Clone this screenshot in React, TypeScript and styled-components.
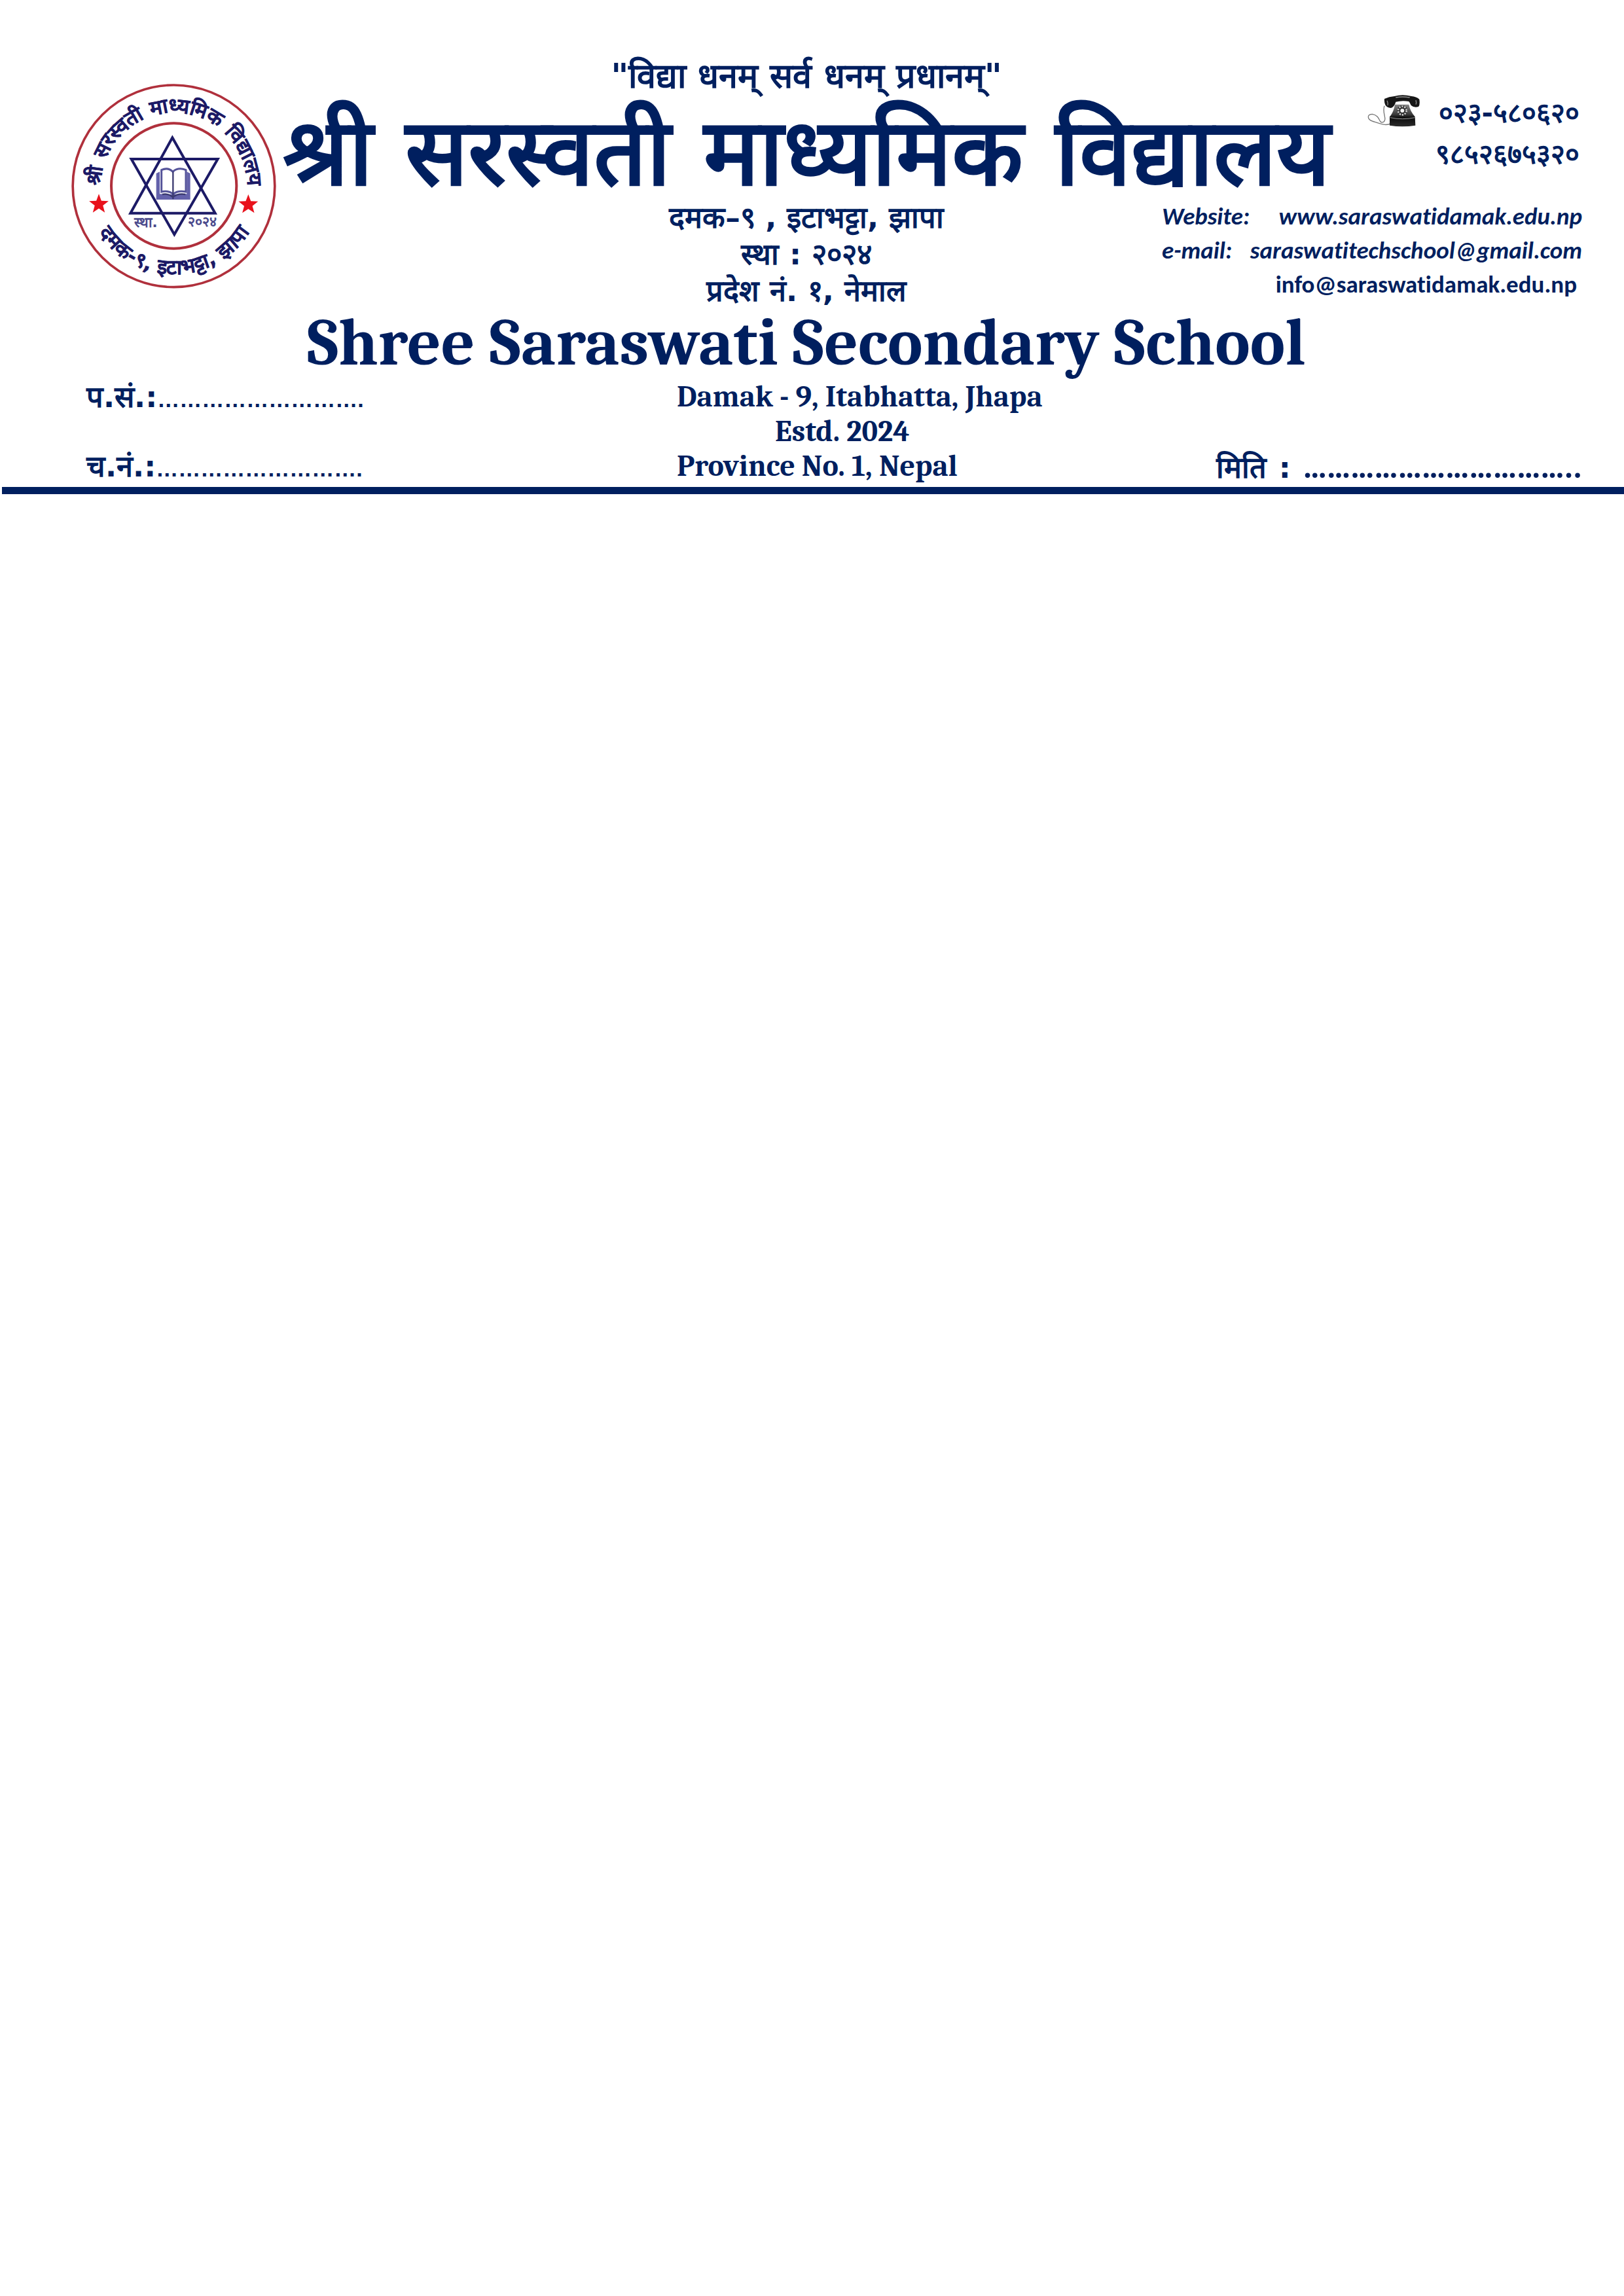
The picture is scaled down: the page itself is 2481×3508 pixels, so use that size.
import React from 'react';
import styled, { createGlobalStyle } from 'styled-components';

const navy = '#001f5f';
const deva = '"DejaVu Sans", sans-serif';
const serif = 'Caladea, Cambria, "Liberation Serif", serif';
const sans = 'Carlito, Calibri, Lato, sans-serif';

const GlobalStyle = createGlobalStyle`
  body {
    margin: 0;
    background: #ffffff;
    color: ${navy};
  }
`;

const Page = styled.main`
  display: flex;
  flex-direction: column;
`;

const Masthead = styled.header`
  display: grid;
  grid-template-columns: 318px 1fr 380px;
  grid-template-rows: repeat(4, auto);
  padding: 71px 64px 0 109px;
`;

const Crest = styled.svg`
  grid-column: 1;
  grid-row: 1 / 4;
  width: 313px;
  height: 313px;
  margin-top: 57px;
`;

const Motto = styled.p`
  grid-column: 2;
  margin: 0;
  text-align: center;
  white-space: nowrap;
  font: 700 52px/90px ${deva};
`;

const NepaliName = styled.h1`
  grid-column: 2;
  margin: 0;
  text-align: center;
  white-space: nowrap;
  font: 700 142px/144px ${deva};
`;

const NepaliAddress = styled.address`
  grid-column: 2;
  grid-row: 3;
  text-align: center;
  font: 700 45px/56px ${deva};
`;

const EnglishName = styled.h2`
  grid-column: 2;
  grid-row: 4;
  margin: 0;
  text-align: center;
  white-space: nowrap;
  font: 700 101px/102px ${serif};
`;

const Phones = styled.div`
  grid-column: 3;
  grid-row: 1 / 3;
  display: flex;
  justify-content: flex-end;
  align-items: flex-start;
  gap: 24px;
  padding-top: 70px;
`;

const PhoneIcon = styled.svg`
  width: 80px;
  height: 50px;
  padding-top: 4px;
`;

const PhoneList = styled.div`
  text-align: right;
  padding-right: 4px;
  font: 700 42px/63px ${deva};
`;

const Web = styled.div`
  grid-column: 2 / 4;
  grid-row: 3;
  justify-self: end;
  width: 642px;
  font: 700 37px/52px ${sans};
  font-variant-ligatures: none;
`;

const WebRow = styled.div<{ $upright?: boolean }>`
  display: flex;
  justify-content: ${p => (p.$upright ? 'flex-end' : 'space-between')};
  padding-right: ${p => (p.$upright ? '8px' : '0')};
  font-style: ${p => (p.$upright ? 'normal' : 'italic')};
`;

const Link = styled.a`
  color: inherit;
  text-decoration: none;
`;

const Details = styled.section`
  display: grid;
  grid-template-columns: 902fr 824fr 559fr;
  grid-auto-rows: 53px;
  padding: 5px 64px 5px 132px;
  white-space: nowrap;
  font: 700 46px/53px ${serif};
`;

const Line = styled.div<{ $indent?: boolean }>`
  grid-column: 2;
  padding-left: ${p => (p.$indent ? '150px' : '0')};
`;

const Reference = styled.div<{ $row: number }>`
  grid-column: 1;
  grid-row: ${p => p.$row};
  font: 700 45px/53px ${deva};
`;

const DateField = styled.div`
  grid-column: 3;
  grid-row: 3;
  display: flex;
  justify-content: space-between;
  align-items: baseline;
  font: 700 45px/53px ${deva};
`;

const Dots = styled.span`
  font: 700 34px/53px "Liberation Sans", sans-serif;
`;

const RoundDots = styled.span`
  font: 700 51px/53px ${sans};
`;

const Rule = styled.hr`
  height: 11px;
  margin: 0 0 0 3px;
  border: 0;
  background: ${navy};
`;

const starPath = (cx: number, cy: number, r: number) =>
  Array.from({ length: 10 }, (_, i) => {
    const radius = i % 2 ? r * 0.42 : r;
    const a = (Math.PI / 5) * i - Math.PI / 2;
    return `${(cx + radius * Math.cos(a)).toFixed(1)},${(cy + radius * Math.sin(a)).toFixed(1)}`;
  }).join(' ');

function SchoolCrest() {
  return (
    <Crest viewBox="57 55 939 939" role="img" aria-label="School crest">
      <defs>
        <path id="arc-top" d="M 191 560 L 191 524 A 336 336 0 0 1 863 524 L 863 560" />
        <path id="arc-bottom" d="M 121 523 A 406 406 0 0 0 933 523" />
      </defs>
      <g fill="none" stroke="#b0303c">
        <circle cx="526.5" cy="524" r="463" strokeWidth="11" />
        <circle cx="527" cy="523" r="287" strokeWidth="12" />
      </g>
      <g fill="#1c1a66" stroke="#1c1a66" strokeWidth="1" fontFamily={deva} fontWeight="700" textAnchor="middle">
        <text fontSize="94">
          <textPath href="#arc-top" startOffset="50%">श्री सरस्वती माध्यमिक विद्यालय</textPath>
        </text>
        <text fontSize="94">
          <textPath href="#arc-bottom" startOffset="50%">दमक-९, इटाभट्टा, झापा</textPath>
        </text>
      </g>
      <g fill="#4b4a8c" fontFamily={deva} fontWeight="700" textAnchor="middle">
        <text x="398" y="711" fontSize="64">स्था.</text>
        <text x="656" y="709" fontSize="64">२०२४</text>
      </g>
      <g fill="none" stroke="#1c1a66" strokeWidth="12">
        <path d="M520 302 L716 648 L328 648 Z" />
        <path d="M332 400 L728 400 L529 746 Z" />
      </g>
      <path d="M446 466 L462 458 L462 560 L520 562 L586 560 L586 458 L602 466 L602 586 L446 586 Z" fill="#6462ab" />
      <path d="M470 450 Q500 436 522 458 Q546 436 582 450 L582 550 Q546 542 524 560 Q500 542 470 550 Z" fill="#fff" stroke="#55549a" strokeWidth="9" />
      <path d="M523 458 V584 M474 562 Q500 556 522 574 Q546 556 580 562" fill="none" stroke="#3b3a70" strokeWidth="7" />
      <polygon points={starPath(183, 607, 47)} fill="#e8121c" />
      <polygon points={starPath(868, 609, 47)} fill="#e8121c" />
    </Crest>
  );
}

function Telephone() {
  return (
    <PhoneIcon viewBox="0 0 240 150" role="img" aria-label="Telephone">
      <defs>
        <linearGradient id="body" x1="0" y1="0" x2="0" y2="1">
          <stop offset="0" stopColor="#888" />
          <stop offset="0.45" stopColor="#3a3a3a" />
          <stop offset="0.6" stopColor="#0c0c0c" />
          <stop offset="1" stopColor="#2c2c2c" />
        </linearGradient>
      </defs>
      <path
        d="M78 50 C66 80 92 112 74 124 C48 134 64 96 22 88 C-4 90 0 112 22 120 C48 128 84 146 108 130"
        fill="none"
        stroke="#777"
        strokeWidth="4"
      />
      <path d="M126 44 L190 44 C194 66 204 84 218 100 L220 140 Q160 150 102 140 L102 100 C116 84 122 66 126 44 Z" fill="url(#body)" />
      <path d="M104 104 Q160 116 218 104" fill="none" stroke="#999" strokeWidth="3" />
      <path
        d="M78 18 Q100 8 124 6 Q160 -4 202 6 Q224 8 238 20 Q242 46 234 54 Q214 60 200 48 Q194 34 190 30 Q160 24 130 32 Q124 54 108 60 Q88 58 82 46 Q76 32 78 18 Z"
        fill="#161616"
      />
      <path d="M130 12 Q160 6 194 12 M90 26 Q96 40 92 48 M222 24 Q226 36 222 44" fill="none" stroke="#8d8d8d" strokeWidth="4" />
      <circle cx="160" cy="72" r="24" fill="#2c2c2c" />
      <circle cx="160" cy="72" r="19" fill="none" stroke="#c9c9c9" strokeWidth="8" strokeDasharray="7 5" />
      <circle cx="160" cy="72" r="9" fill="#f2f2f2" />
    </PhoneIcon>
  );
}

export default function App() {
  return (
    <>
      <GlobalStyle />
      <Page>
        <Masthead>
          <SchoolCrest />
          <Motto>"विद्या धनम् सर्व धनम् प्रधानम्"</Motto>
          <NepaliName>श्री सरस्वती माध्यमिक विद्यालय</NepaliName>
          <Phones>
            <Telephone />
            <PhoneList>
              <div>०२३-५८०६२०</div>
              <div>९८५२६७५३२०</div>
            </PhoneList>
          </Phones>
          <NepaliAddress>
            <div>दमक–९ , इटाभट्टा, झापा</div>
            <div>स्था : २०२४</div>
            <div>प्रदेश नं. १, नेमाल</div>
          </NepaliAddress>
          <Web>
            <WebRow>
              <span>Website:</span>
              <Link href="#website">www.saraswatidamak.edu.np</Link>
            </WebRow>
            <WebRow>
              <span>e-mail:</span>
              <Link href="mailto:saraswatitechschool@gmail.com">saraswatitechschool@gmail.com</Link>
            </WebRow>
            <WebRow $upright>
              <Link href="mailto:info@saraswatidamak.edu.np">info@saraswatidamak.edu.np</Link>
            </WebRow>
          </Web>
          <EnglishName>Shree Saraswati Secondary School</EnglishName>
        </Masthead>
        <Details>
          <Reference $row={1}>
            प.सं.:<Dots>……………………….</Dots>
          </Reference>
          <Line>Damak - 9, Itabhatta, Jhapa</Line>
          <Line $indent>Estd. 2024</Line>
          <Line>Province No. 1, Nepal</Line>
          <Reference $row={3}>
            च.नं.:<Dots>……………………….</Dots>
          </Reference>
          <DateField>
            <span>मिति</span>
            <span>:</span>
            <RoundDots>……………………………..</RoundDots>
          </DateField>
        </Details>
        <Rule />
      </Page>
    </>
  );
}
